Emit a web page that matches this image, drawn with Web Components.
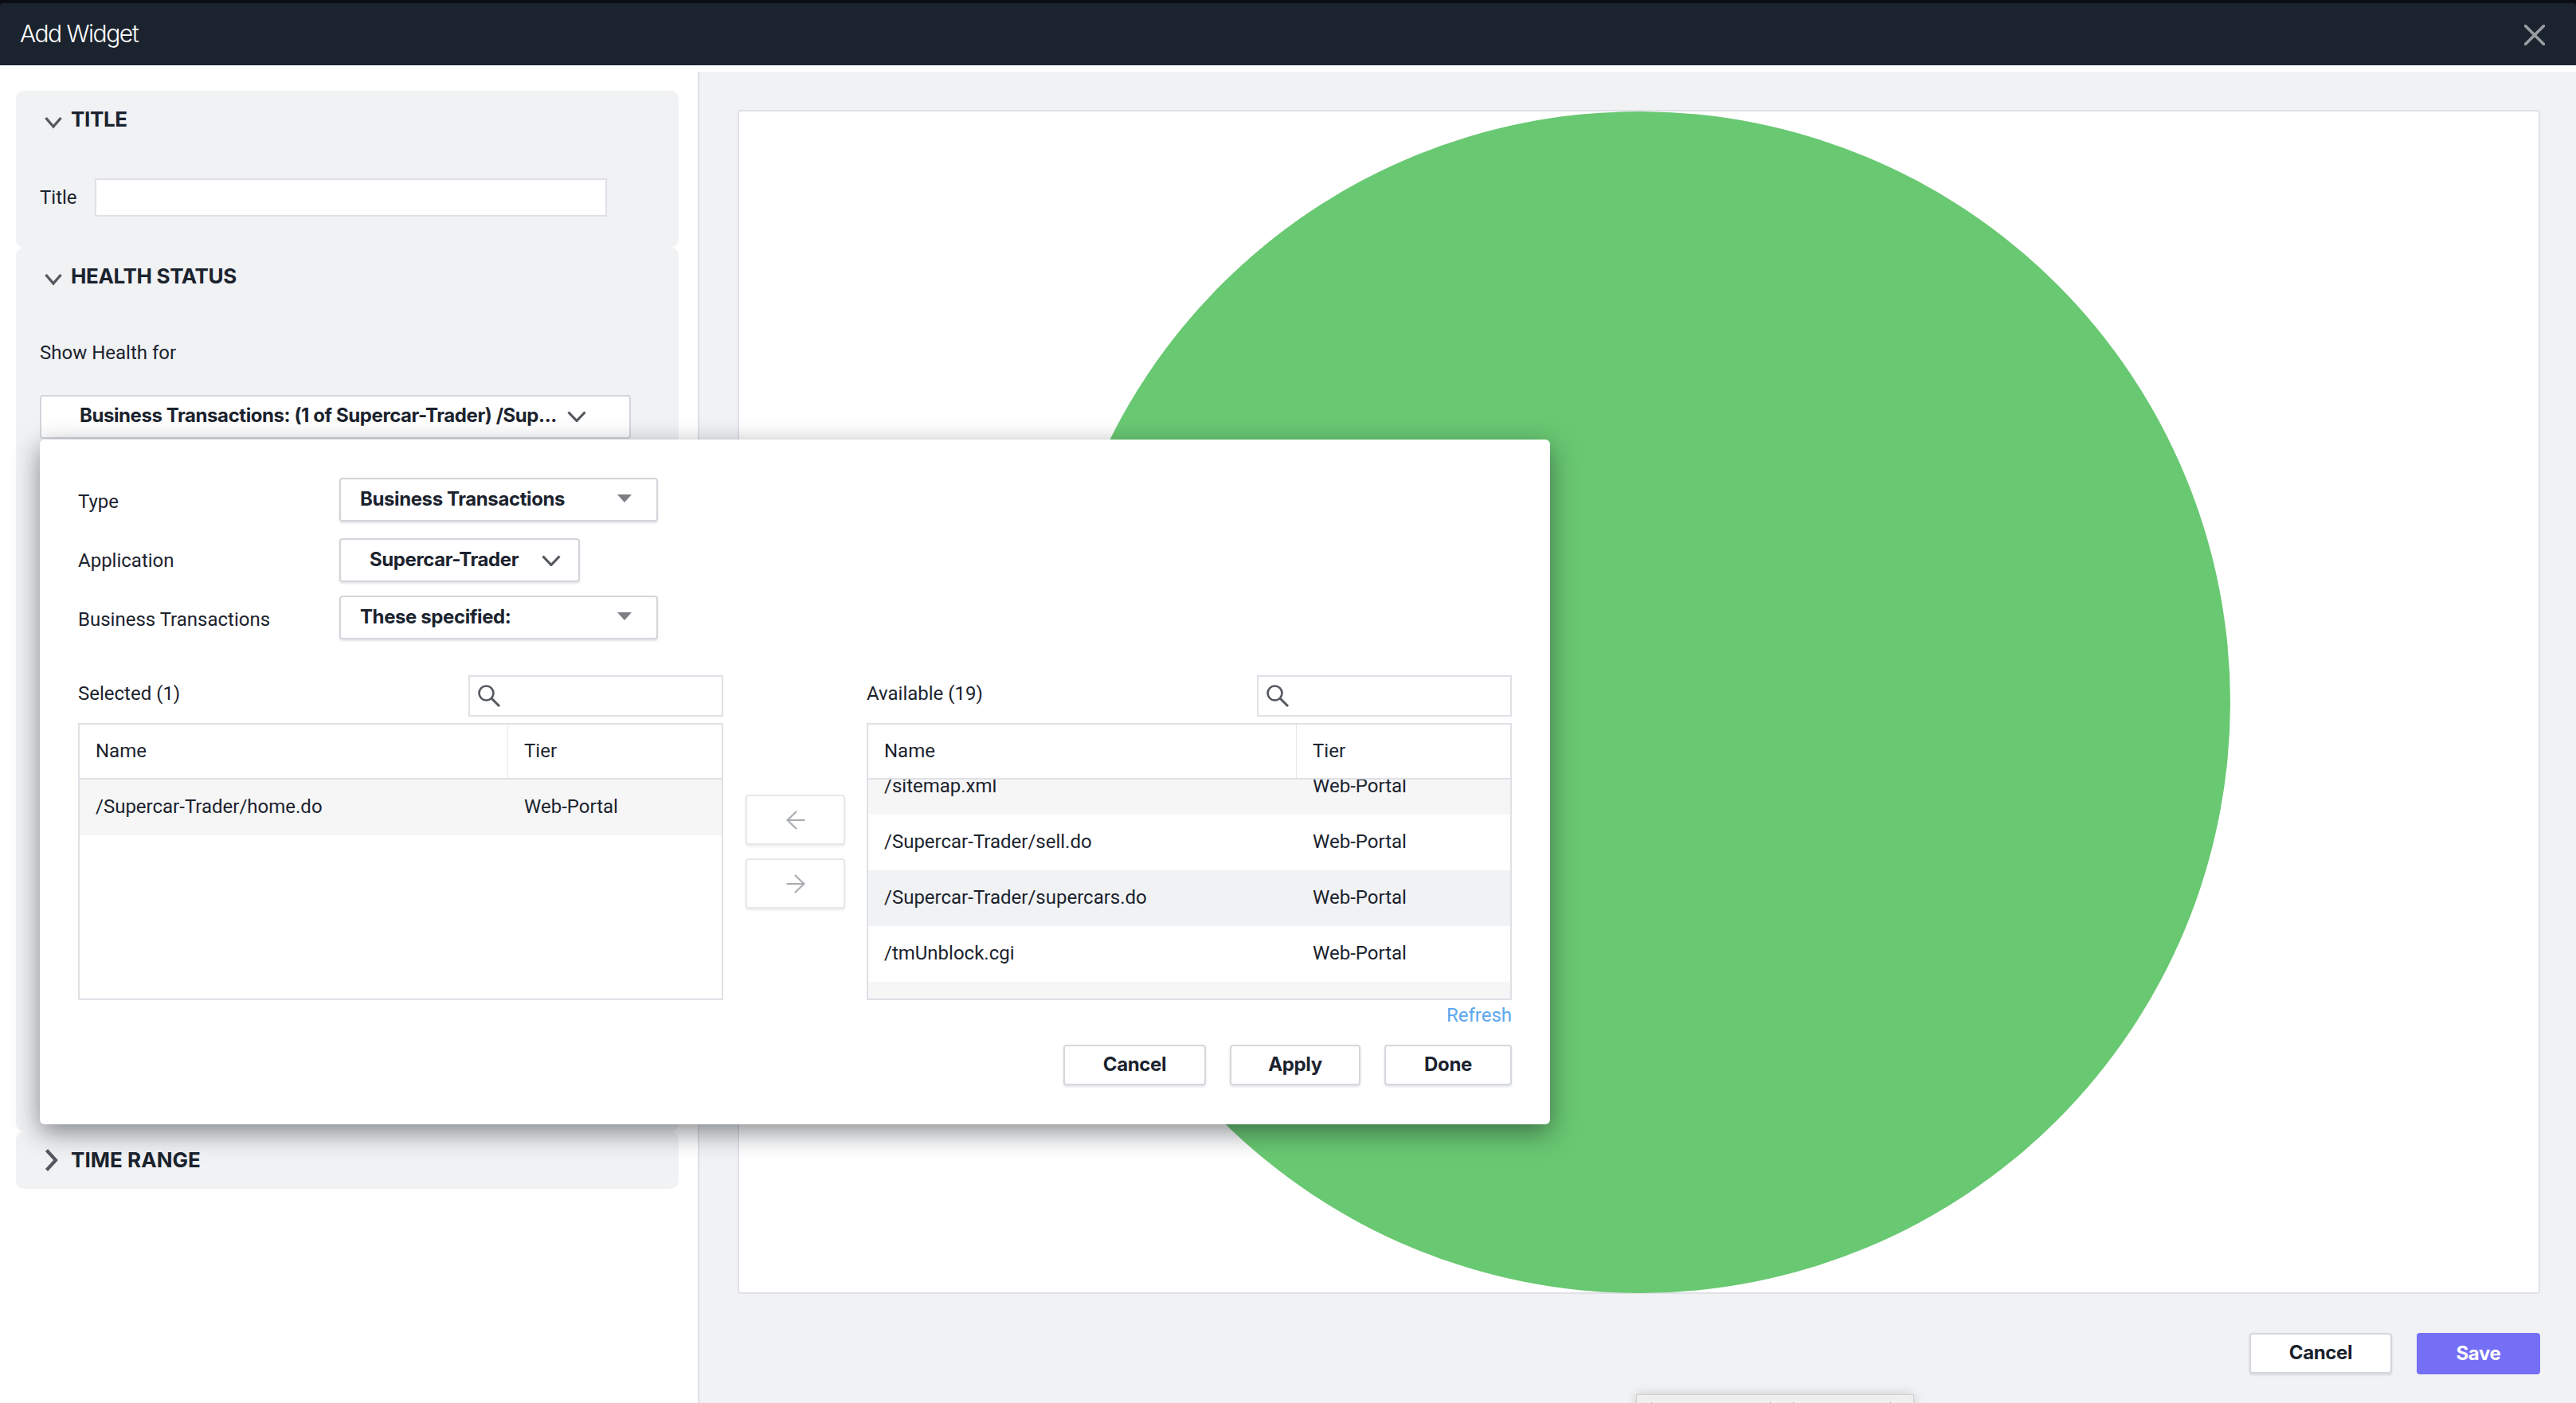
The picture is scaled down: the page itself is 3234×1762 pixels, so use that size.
<!DOCTYPE html>
<html lang="en">
<head>
<meta charset="utf-8">
<title>Add Widget</title>
<style>
  html, body { margin: 0; padding: 0; width: 3234px; height: 1762px; overflow: hidden; background: #fff; }
  body { font-family: Roboto, "Liberation Sans", sans-serif; font-size: 24px; color: #1b232e; }
</style>
</head>
<body>
<aw-app>
  <aw-header slot="header">Add Widget</aw-header>

  <aw-sidebar slot="sidebar">
    <aw-section heading="TITLE" open style="height:197px">
      <aw-title-field>Title</aw-title-field>
    </aw-section>
    <aw-section heading="HEALTH STATUS" open style="height:1110px">
      <aw-health-for label="Show Health for">Business Transactions: (1 of Supercar-Trader) /Sup...</aw-health-for>
    </aw-section>
    <aw-section heading="TIME RANGE" style="height:72px;--ls:.05px"></aw-section>
  </aw-sidebar>

  <aw-canvas slot="main">
    <aw-health-circle></aw-health-circle>
  </aw-canvas>

  <aw-footer slot="main">
    <aw-button style="width:179px">Cancel</aw-button>
    <aw-button primary style="width:155px">Save</aw-button>
  </aw-footer>

  <aw-popup slot="overlay">
    <aw-form-row label="Type" style="margin-bottom:21px"><aw-select style="width:400px" pad="24">Business Transactions</aw-select></aw-form-row>
    <aw-form-row label="Application" style="margin-bottom:17px;--lp:0px"><aw-select style="width:302px" chevron pad="36">Supercar-Trader</aw-select></aw-form-row>
    <aw-form-row label="Business Transactions" style="margin-bottom:45px"><aw-select style="width:400px" pad="24">These specified:</aw-select></aw-form-row>

    <aw-transfer>
      <aw-list slot="left" label="Selected (1)">
        <aw-row shade="a" name="/Supercar-Trader/home.do" tier="Web-Portal"></aw-row>
      </aw-list>
      <aw-arrow slot="mid" dir="left"></aw-arrow>
      <aw-arrow slot="mid" dir="right"></aw-arrow>
      <aw-list slot="right" label="Available (19)" offset="26">
        <aw-row shade="a" name="/sitemap.xml" tier="Web-Portal"></aw-row>
        <aw-row name="/Supercar-Trader/sell.do" tier="Web-Portal"></aw-row>
        <aw-row shade="b" name="/Supercar-Trader/supercars.do" tier="Web-Portal"></aw-row>
        <aw-row name="/tmUnblock.cgi" tier="Web-Portal"></aw-row>
        <aw-row shade="a" name="" tier=""></aw-row>
      </aw-list>
    </aw-transfer>

    <aw-refresh>Refresh</aw-refresh>

    <aw-actions>
      <aw-button style="width:179px">Cancel</aw-button>
      <aw-button style="width:164px">Apply</aw-button>
      <aw-button style="width:160px">Done</aw-button>
    </aw-actions>
  </aw-popup>

  <aw-peek slot="overlay"></aw-peek>
</aw-app>

<script>
const REG = 'Roboto, "Liberation Sans", sans-serif';
const BOLD = 'Inter, "Liberation Sans", sans-serif';
function def(name, html, setup) {
  const tpl = document.createElement('template');
  tpl.innerHTML = html;
  customElements.define(name, class extends HTMLElement {
    constructor() {
      super();
      this.attachShadow({ mode: 'open' }).appendChild(tpl.content.cloneNode(true));
    }
    connectedCallback() { if (setup) setup(this, this.shadowRoot); }
  });
}

def('aw-app', `<style>
  :host { display:flex; flex-direction:column; width:3234px; height:1762px; position:relative; overflow:hidden; font-family:${REG}; }
  .body { flex:1; display:flex; min-height:0; }
  .main { flex:1; display:flex; flex-direction:column; min-width:0; margin-top:8px; background:#f1f2f4; padding:48px 45px 0 48px; box-sizing:border-box; }
</style>
<slot name="header"></slot>
<div class="body">
  <slot name="sidebar"></slot>
  <div class="main"><slot name="main"></slot></div>
</div>
<slot name="overlay"></slot>`);

def('aw-header', `<style>
  :host { display:block; flex:none; background:#0b0e13; padding-top:4px; }
  .bar { height:78px; box-sizing:border-box; padding:0 39px 2px 25px; background:#1b232e; border-radius:4px 4px 0 0; display:flex; align-items:center; justify-content:space-between; color:#fff; font-family:${BOLD}; font-size:30px; font-weight:300; letter-spacing:-1.5px; }
  svg { display:block; margin-top:4px; }
</style>
<div class="bar"><span><slot></slot></span>
<svg width="26" height="26" viewBox="0 0 26 26"><path d="M1.5 1.5 24.5 24.5M24.5 1.5 1.5 24.5" fill="none" stroke="#9a9da1" stroke-width="3.6" stroke-linecap="round"/></svg></div>`);

def('aw-sidebar', `<style>
  :host { display:block; flex:none; box-sizing:border-box; width:878px; padding:32px 0 0 20px; position:relative; }
  :host::after { content:""; position:absolute; right:0; top:8px; bottom:0; width:2px; background:#dfe1e5; }
  .inner { width:832px; }
</style><div class="inner"><slot></slot></div>`);

def('aw-section', `<style>
  :host { display:block; box-sizing:border-box; background:#f1f2f4; border-radius:10px; overflow:hidden; }
  .head { height:72px; display:flex; align-items:center; padding-left:36px; gap:10px; font-family:${BOLD}; font-size:26px; font-weight:700; letter-spacing:var(--ls, -.35px); color:#1b232e; }
  .head span { padding-bottom:1px; }
  svg { display:block; flex:none; }
  .body { padding:0 30px; }
</style>
<div class="head"><svg id="ic" width="23" height="28" viewBox="0 0 23 28"><path id="p" fill="none" stroke="#54585f" stroke-width="3.6"/></svg><span id="t"></span></div>
<div class="body"><slot></slot></div>`, (el, s) => {
  s.getElementById('t').textContent = el.getAttribute('heading');
  const open = el.hasAttribute('open');
  s.getElementById('p').setAttribute('d', open ? 'M1.5 12 11 23 20.5 12' : 'M2.5 1.5 14 14 2.5 26.5');
  s.getElementById('p').setAttribute('stroke-width', open ? '3.4' : '4.2');
});

def('aw-title-field', `<style>
  :host { display:flex; align-items:center; gap:22px; padding-top:38px; }
  .input { width:643px; height:48px; box-sizing:border-box; background:#fff; border:2.5px solid #dfe1e6; }
</style><span><slot></slot></span><div class="input"></div>`);

def('aw-health-for', `<style>
  :host { display:block; padding-top:45px; }
  .lab { height:30px; line-height:30px; margin-bottom:38px; }
  .dd { width:742px; height:55px; box-sizing:border-box; background:#fff; border:2px solid #d2d5da; border-radius:4px; display:flex; align-items:center; gap:13px; padding:0 0 4px 48px; font-family:${BOLD}; font-weight:700; letter-spacing:-.42px; color:#1b232e; white-space:nowrap; }
  svg { display:block; flex:none; margin-top:3px; }
</style>
<div class="lab" id="l"></div>
<div class="dd"><span><slot></slot></span><svg width="24" height="14" viewBox="0 0 24 14"><path d="M1.5 1.5 12 12.5 22.5 1.5" fill="none" stroke="#54585f" stroke-width="3.2"/></svg></div>`,
(el, s) => { s.getElementById('l').textContent = el.getAttribute('label'); });

def('aw-canvas', `<style>
  :host { display:flex; justify-content:center; align-items:center; flex:none; width:2263px; height:1487px; box-sizing:border-box; background:#fff; border:2px solid #dfe1e6; border-radius:4px; }
</style><slot></slot>`);

def('aw-health-circle', `<style>
  :host { display:block; width:1484px; height:1484px; flex:none; }
  svg { display:block; }
</style><svg width="1484" height="1484" viewBox="0 0 1484 1484"><circle cx="742" cy="742" r="742" fill="#69c872"/></svg>`);

def('aw-footer', `<style>
  :host { display:flex; justify-content:flex-end; gap:31px; margin-top:49px; }
</style><slot></slot>`);

def('aw-button', `<style>
  :host { display:block; height:51px; }
  .b { height:100%; box-sizing:border-box; background:#fff; border:2px solid #d4d7dc; border-radius:4px; box-shadow:0 2px 3px rgba(27,35,46,.12); display:flex; align-items:center; justify-content:center; font-family:${BOLD}; font-size:24px; font-weight:700; letter-spacing:-.35px; color:#1b232e; padding-bottom:2px; }
  :host([primary]) { height:52px; }
  :host([primary]) .b { background:#756ff6; border-color:#756ff6; color:#fff; box-shadow:none; }
</style><div class="b"><slot></slot></div>`);

def('aw-popup', `<style>
  :host { display:block; position:absolute; left:50px; top:552px; width:1896px; height:860px; box-sizing:border-box; background:#fff; border-radius:6px; padding:48px 48px 0; box-shadow:0 10px 32px rgba(20,25,32,.5); }
</style><slot></slot>`);

def('aw-form-row', `<style>
  :host { display:flex; align-items:center; }
  .l { width:328px; flex:none; padding-top:var(--lp, 5px); }
</style><div class="l" id="l"></div><slot></slot>`, (el, s) => { s.getElementById('l').textContent = el.getAttribute('label'); });

def('aw-select', `<style>
  :host { display:block; height:55px; }
  .s { height:100%; box-sizing:border-box; background:#fff; border:2px solid #d2d5da; border-radius:4px; box-shadow:0 2px 3px rgba(27,35,46,.12); display:flex; align-items:center; justify-content:space-between; padding:0 31px 3px 0; font-family:${BOLD}; font-weight:700; letter-spacing:-.4px; color:#1b232e; white-space:nowrap; }
  svg { display:block; flex:none; }
</style>
<div class="s"><span id="t"><slot></slot></span><span id="i"></span></div>`, (el, s) => {
  s.getElementById('t').style.paddingLeft = el.getAttribute('pad') + 'px';
  s.getElementById('i').innerHTML = el.hasAttribute('chevron')
    ? '<svg style="margin:3px -9px 0 0" width="24" height="14" viewBox="0 0 24 14"><path d="M1.5 1.5 12 12.5 22.5 1.5" fill="none" stroke="#54585f" stroke-width="3.2"/></svg>'
    : '<svg width="18" height="10" viewBox="0 0 18 10"><path d="M0 0H18L9 10Z" fill="#7b7e83"/></svg>';
});

def('aw-transfer', `<style>
  :host { display:flex; align-items:stretch; }
  .mid { width:180px; flex:none; box-sizing:border-box; padding:150px 0 0 28px; display:flex; flex-direction:column; gap:17px; }
</style><slot name="left"></slot><div class="mid"><slot name="mid"></slot></div><slot name="right"></slot>`);

def('aw-list', `<style>
  :host { display:block; width:810px; flex:none; }
  .top { height:52px; display:flex; align-items:center; justify-content:space-between; margin-bottom:8px; }
  .top > span { padding-bottom:6px; }
  .search { width:320px; height:52px; box-sizing:border-box; border:2px solid #dfe1e6; display:flex; align-items:center; padding-left:9px; background:#fff; }
  svg { display:block; }
  .table { height:348px; box-sizing:border-box; border:2px solid #dfe1e6; display:flex; flex-direction:column; overflow:hidden; background:#fff; }
  .hd { flex:none; height:69px; box-sizing:border-box; border-bottom:2px solid #dfe1e6; display:grid; grid-template-columns:537px 1fr; background:#fff; position:relative; z-index:1; align-items:center; }
  .hd span { padding-left:20px; height:100%; display:flex; align-items:center; box-sizing:border-box; padding-bottom:2px; }
  .hd span + span { border-left:1px solid #e6e8eb; }
  .rows { flex:1; min-height:0; overflow:hidden; }
</style>
<div class="top"><span id="l"></span>
<div class="search"><svg width="30" height="30" viewBox="0 0 30 30"><circle cx="11.5" cy="11.5" r="9" fill="none" stroke="#54585f" stroke-width="2.6"/><path d="M18 18 28 28" stroke="#54585f" stroke-width="3" fill="none"/></svg></div></div>
<div class="table"><div class="hd"><span>Name</span><span>Tier</span></div>
<div class="rows"><div id="inner"><slot></slot></div></div></div>`, (el, s) => {
  s.getElementById('l').textContent = el.getAttribute('label');
  s.getElementById('inner').style.marginTop = -(+el.getAttribute('offset') || 0) + 'px';
});

def('aw-row', `<style>
  :host { display:grid; grid-template-columns:538px 1fr; height:70px; align-items:center; background:#fff; }
  :host([shade="a"]) { background:#f6f6f7; }
  :host([shade="b"]) { background:#f1f2f4; }
  span { padding-left:20px; padding-bottom:3px; }
</style><span id="n"></span><span id="t"></span>`, (el, s) => {
  s.getElementById('n').textContent = el.getAttribute('name');
  s.getElementById('t').textContent = el.getAttribute('tier');
});

def('aw-arrow', `<style>
  :host { display:flex; width:125px; height:63px; box-sizing:border-box; border:2px solid #e6e8eb; border-radius:4px; background:#fff; box-shadow:0 2px 3px rgba(27,35,46,.1); align-items:center; justify-content:center; }
  svg { display:block; }
</style><svg width="24" height="24" viewBox="0 0 24 24"><path id="p" fill="none" stroke="#a9acb0" stroke-width="2.2"/></svg>`, (el, s) => {
  s.getElementById('p').setAttribute('d', el.getAttribute('dir') === 'left'
    ? 'M23.5 12H2M13 1 1.5 12 13 23' : 'M.5 12H22M11 1 22.5 12 11 23');
});

def('aw-refresh', `<style>
  :host { display:block; text-align:right; color:#5ba7ee; height:30px; line-height:30px; margin-top:4px; }
</style><slot></slot>`);

def('aw-actions', `<style>
  :host { display:flex; justify-content:flex-end; gap:30px; margin-top:22px; }
</style><slot></slot>`);

def('aw-peek', `<style>
  :host { display:block; position:absolute; left:2054px; top:1751px; width:349px; height:20px; box-sizing:border-box; background:#efefef; border:1px solid #cfcfcf; box-shadow:0 0 14px rgba(0,0,0,.16); }
  i { position:absolute; top:9px; width:1px; height:2px; background:#999; }
</style><i style="left:18px"></i><i style="left:167px"></i><i style="left:196px"></i><i style="left:318px"></i>`);
</script>
</body>
</html>
